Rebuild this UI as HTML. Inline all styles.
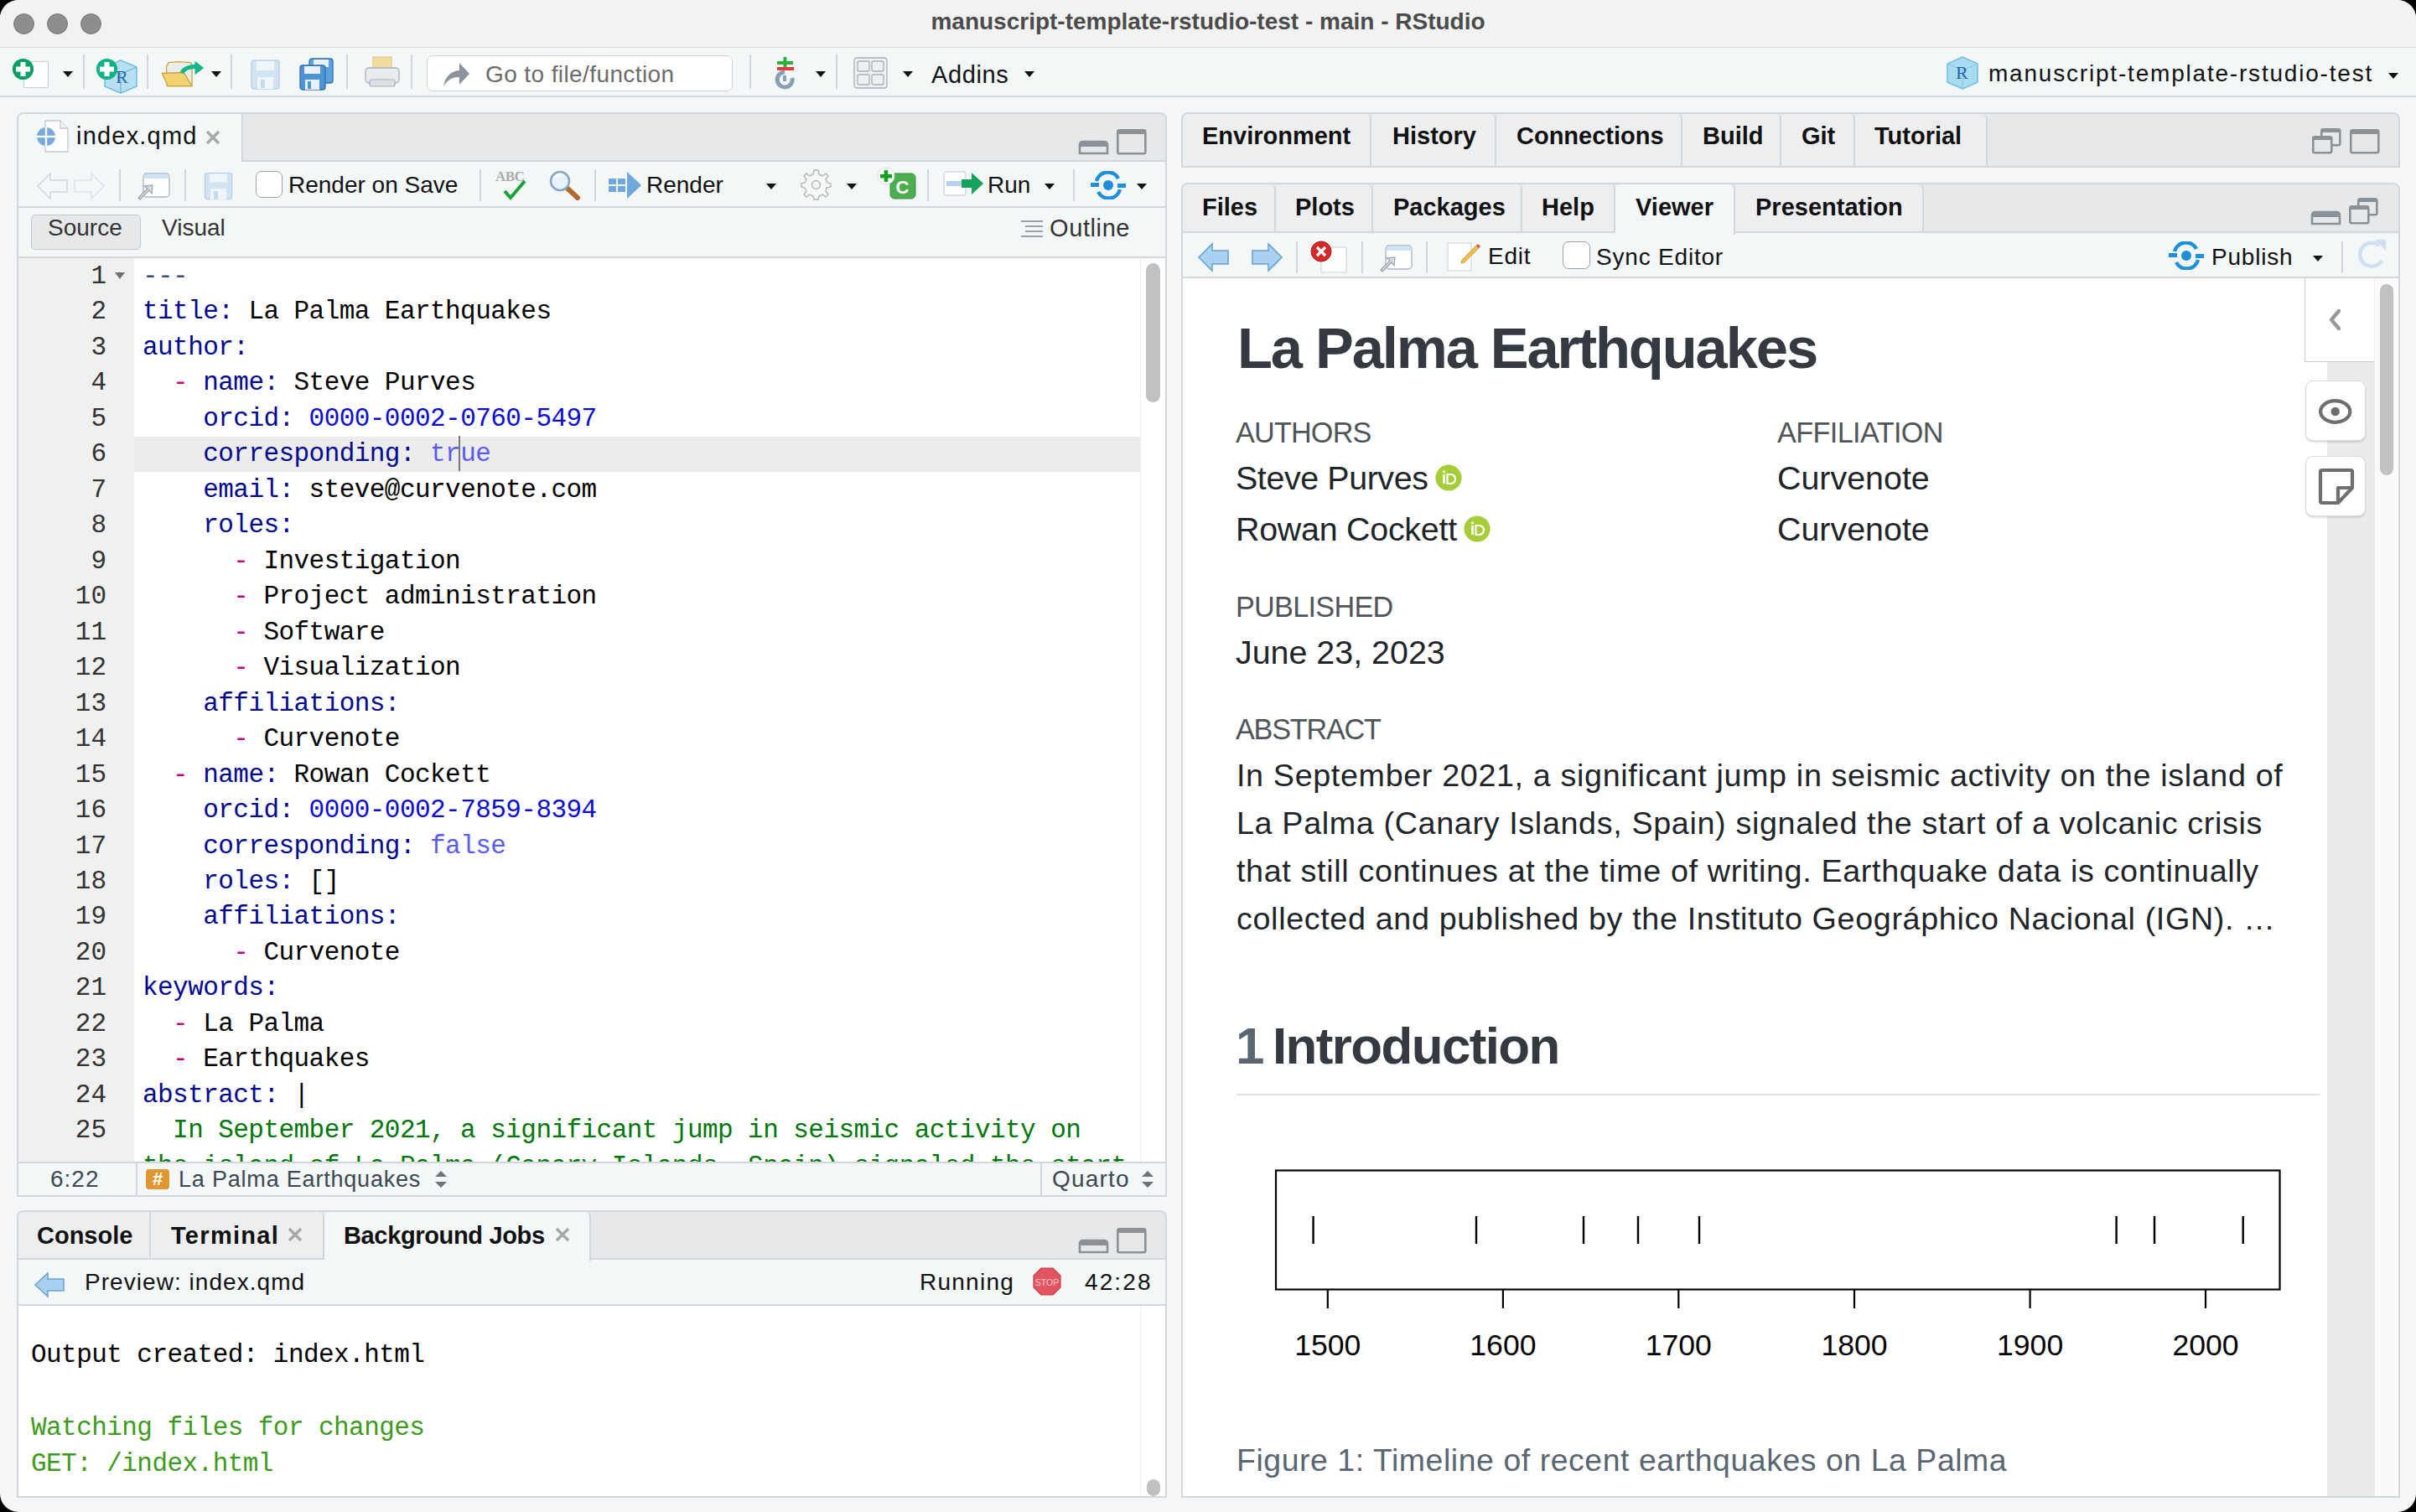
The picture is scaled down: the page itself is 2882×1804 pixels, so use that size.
<!DOCTYPE html>
<html><head><meta charset="utf-8">
<style>
*{box-sizing:border-box;margin:0;padding:0}
html,body{width:2882px;height:1804px;overflow:hidden;background:#000}
body{font-family:"Liberation Sans",sans-serif;position:relative}
.a{position:absolute}
#win{position:absolute;left:0;top:0;width:2882px;height:1804px;background:#f5f6f8;border-radius:22px;overflow:hidden}
#title{left:0;top:0;width:2882px;height:57px;background:#f2f2f2;border-bottom:1px solid #d9d9d9}
.tl{width:25px;height:25px;border-radius:50%;background:#8d8d8d;border:1.5px solid #767676;top:16px}
#ttext{left:0;top:10px;width:2882px;text-align:center;font-weight:bold;font-size:28px;color:#4b4b4b;white-space:nowrap}
#tb{left:0;top:57px;width:2882px;height:59px;background:#f3f7f8;border-bottom:2px solid #d6dade}
.sep{width:2px;background:#d3d6d9}
.dd{width:0;height:0;border-left:7px solid transparent;border-right:7px solid transparent;border-top:7px solid #111}
.box{border:2px solid #d3d7db;background:#f3f7f8}
.strip{background:#e6e8ea}
.tab{font-weight:bold;font-size:29px;color:#111;white-space:nowrap}
.ui{font-size:28px;color:#111;white-space:nowrap}
.mono{font-family:"Liberation Mono",monospace}
.hl{border-bottom:2px solid #d3d7db}
#code .ln{position:absolute;left:0;width:105px;text-align:right;color:#333;letter-spacing:0}
#code .l{position:absolute;left:148px;white-space:pre;color:#000}
.k{color:#00078e}.d{color:#c4008a}.n{color:#0a0ad0}.b{color:#5b5bef}.g{color:#00760a}.dash{color:#3c4e78}
</style></head>
<body>
<div id="win">
  <!-- title bar -->
  <div id="title" class="a">
    <div class="a tl" style="left:16px"></div>
    <div class="a tl" style="left:56px"></div>
    <div class="a tl" style="left:96px"></div>
    <div id="ttext" class="a">manuscript-template-rstudio-test - main - RStudio</div>
  </div>
  <!-- main toolbar -->

  <div id="tb" class="a">
    <!-- new file -->
    <svg class="a" style="left:12px;top:9px" width="52" height="52" viewBox="0 0 52 52">
      <rect x="16.5" y="7.5" width="29" height="31" rx="1.5" fill="#fff" stroke="#c9ced6" stroke-width="1.2"/>
      <circle cx="15.5" cy="16.5" r="12.6" fill="#0a9f65"/>
      <rect x="7" y="13.5" width="17" height="6" fill="#fff"/><rect x="12.5" y="8" width="6" height="17" fill="#fff"/>
    </svg>
    <div class="a dd" style="left:75px;top:28px;border-width:7px 6.5px 0 6.5px"></div>
    <div class="a sep" style="left:99px;top:8px;height:41px"></div>
    <!-- new project -->
    <svg class="a" style="left:112px;top:9px" width="54" height="52" viewBox="0 0 54 52">
      <path d="M13 14 L32 6 L51 14 L51 37 L32 45 L13 37 Z" fill="#b8e0f2" stroke="#5cb8d8" stroke-width="1.3"/>
      <path d="M13 14 L32 22 L51 14 M32 22 L32 45" fill="none" stroke="#5cb8d8" stroke-width="1.2"/>
      <text x="26" y="33" font-family="Liberation Serif" font-size="22" fill="#2460b0">R</text>
      <circle cx="15.5" cy="16.5" r="12.6" fill="#0db287"/>
      <rect x="7" y="13.5" width="17" height="6" fill="#fff"/><rect x="12.5" y="8" width="6" height="17" fill="#fff"/>
    </svg>
    <div class="a sep" style="left:175px;top:8px;height:41px"></div>
    <!-- open -->
    <svg class="a" style="left:190px;top:7px" width="56" height="50" viewBox="0 0 56 50">
      <path d="M8.5 15.5 L11 10.6 L22.6 9.7 L37.5 10.6 L39 13 L39 38.7 L9.3 38.7 Z" fill="#ececec" stroke="#c9a441" stroke-width="1.3"/>
      <path d="M3.5 23.5 L29.2 22.5 L38.8 38.7 L10.2 38.7 Z" fill="#f2d273" stroke="#c9a441" stroke-width="1.3"/>
      <path d="M26.7 23 C30 17 36 15.5 43 15.5" fill="none" stroke="#12b78a" stroke-width="5"/>
      <path d="M42.5 8.7 L53.2 17 L42.5 25.3 Z" fill="#12b78a"/>
    </svg>
    <div class="a dd" style="left:252px;top:28px;border-width:7px 6.5px 0 6.5px"></div>
    <div class="a sep" style="left:275px;top:8px;height:41px"></div>
    <!-- save (faded) -->
    <svg class="a" style="left:298px;top:13px" width="38" height="38" viewBox="0 0 38 38">
      <rect x="2" y="2" width="33" height="34" rx="3" fill="#d3e3f2" stroke="#bcd2e8" stroke-width="1.5"/>
      <rect x="8" y="3" width="21" height="11" fill="#eef5fb"/>
      <rect x="9" y="22" width="19" height="14" fill="#eef5fb"/><rect x="13" y="25" width="5" height="10" fill="#c5daee"/>
    </svg>
    <!-- save all -->
    <svg class="a" style="left:356px;top:11px" width="44" height="40" viewBox="0 0 44 40">
      <rect x="13" y="2" width="28" height="29" rx="3" fill="#5aa4e0" stroke="#2f6fb5" stroke-width="1.3"/>
      <rect x="18" y="3" width="18" height="9" fill="#e8f2fb"/>
      <rect x="2" y="10" width="30" height="29" rx="3" fill="#4f95d6" stroke="#2f6fb5" stroke-width="1.3"/>
      <rect x="7" y="11" width="19" height="9" fill="#e8f2fb"/>
      <rect x="8" y="27" width="17" height="12" fill="#e8f2fb"/><rect x="11" y="29" width="4" height="9" fill="#4f95d6"/>
    </svg>
    <div class="a sep" style="left:413px;top:8px;height:41px"></div>
    <!-- print -->
    <svg class="a" style="left:434px;top:9px" width="44" height="42" viewBox="0 0 44 42">
      <rect x="11" y="2" width="22" height="16" fill="#f2dca0" stroke="#d9c27e" stroke-width="1"/>
      <rect x="2" y="15" width="40" height="18" rx="4" fill="#e9ecef" stroke="#a9b0b8" stroke-width="1.3"/>
      <rect x="7" y="29" width="30" height="8" rx="2" fill="#dde1e5" stroke="#a9b0b8" stroke-width="1.2"/>
    </svg>
    <div class="a sep" style="left:490px;top:8px;height:41px"></div>
    <!-- goto -->
    <div class="a" style="left:509px;top:9px;width:365px;height:43px;background:#fff;border:1.5px solid #cfd4d9;border-radius:7px"></div>
    <svg class="a" style="left:526px;top:15px" width="36" height="34" viewBox="0 0 36 34">
      <path d="M3 31 C5 18 14 12 22 12 L22 3 L34 16 L22 29 L22 20 C14 20 8 23 3 31 Z" fill="#8d949b"/>
    </svg>
    <div class="a ui" style="left:579px;top:16px;color:#6b6b6b;font-size:28px;letter-spacing:0.4px">Go to file/function</div>
    <div class="a sep" style="left:894px;top:8px;height:41px"></div>
    <!-- git -->
    <svg class="a" style="left:924px;top:9px" width="26" height="42" viewBox="0 0 26 42">
      <rect x="10.5" y="2" width="4" height="14" fill="#2cb23a"/><rect x="3" y="7" width="19" height="4" fill="#2cb23a"/>
      <rect x="3" y="14" width="20" height="4" fill="#e23b3b"/>
      <path d="M21 27 A9 9 0 1 1 12 20" fill="none" stroke="#8aa0b2" stroke-width="5"/>
      <path d="M12 24 L12 31" stroke="#8aa0b2" stroke-width="4"/>
    </svg>
    <div class="a dd" style="left:973px;top:28px;border-width:7px 6.5px 0 6.5px"></div>
    <div class="a sep" style="left:997px;top:8px;height:41px"></div>
    <!-- grid -->
    <svg class="a" style="left:1018px;top:11px" width="42" height="38" viewBox="0 0 42 38">
      <rect x="1" y="1" width="39" height="36" rx="3" fill="#eef1f4" stroke="#a7b0b9" stroke-width="1.3"/>
      <rect x="5" y="5" width="14" height="12" rx="2" fill="none" stroke="#a7b0b9" stroke-width="1.3"/>
      <rect x="22" y="5" width="14" height="12" rx="2" fill="none" stroke="#a7b0b9" stroke-width="1.3"/>
      <rect x="5" y="21" width="14" height="12" rx="2" fill="none" stroke="#a7b0b9" stroke-width="1.3"/>
      <rect x="22" y="21" width="14" height="12" rx="2" fill="none" stroke="#a7b0b9" stroke-width="1.3"/>
    </svg>
    <div class="a dd" style="left:1077px;top:28px;border-width:7px 6.5px 0 6.5px"></div>
    <div class="a ui" style="left:1111px;top:15.5px;font-size:29px;letter-spacing:0.6px">Addins</div>
    <div class="a dd" style="left:1222px;top:28px;border-width:7px 6.5px 0 6.5px"></div>
    <!-- project -->
    <svg class="a" style="left:2320px;top:9px" width="42" height="42" viewBox="0 0 42 42">
      <path d="M3 10 L21 2 L39 10 L39 32 L21 40 L3 32 Z" fill="#a9dcf2" stroke="#5cb8d8" stroke-width="1.3"/>
      <path d="M3 10 L21 18 L39 10 M21 18 L21 40" fill="none" stroke="#7cc6e0" stroke-width="1"/>
      <text x="13" y="28" font-family="Liberation Serif" font-size="22" fill="#2860a8">R</text>
    </svg>
    <div class="a ui" style="left:2372px;top:15px;font-size:28px;letter-spacing:1.8px">manuscript-template-rstudio-test</div>
    <div class="a dd" style="left:2849px;top:30px;border-width:7px 6.5px 0 6.5px"></div>
  </div>

  <!-- LEFT SOURCE PANE -->
  <div class="a box" style="left:20px;top:134px;width:1372px;height:1294px;border-radius:8px 8px 0 0;background:#f3f7f8"></div>
  <div class="a strip" style="left:22px;top:136px;width:1368px;height:57px;border-radius:6px 6px 0 0;border-bottom:2px solid #d3d7db"></div>
  <div class="a" style="left:22px;top:136px;width:268px;height:59px;background:#f3f7f8;border-right:2px solid #d3d7db;border-radius:6px 0 0 0"></div>
  <div class="a hl" style="left:22px;top:193px;width:1368px;height:55px;background:#f3f7f8"></div>
  <div class="a hl" style="left:22px;top:248px;width:1368px;height:60px;background:#f3f7f8"></div>
  <div id="code" class="a" style="left:22px;top:308px;width:1368px;height:1078px;background:#fff;overflow:hidden"><div class="a" style="left:0;top:0;width:138px;height:1078px;background:#f0f0f0"></div><div class="a" style="left:138px;top:213px;width:1200px;height:42px;background:#ececec"></div><div class="a mono" style="left:0;top:1px;width:1368px;font-size:31px;letter-spacing:-0.55px;line-height:42.47px"><div class="ln" style="top:0.00px">1</div><div class="l" style="top:0.00px"><span class="dash">---</span></div><div class="ln" style="top:42.47px">2</div><div class="l" style="top:42.47px"><span class="k">title:</span> La Palma Earthquakes</div><div class="ln" style="top:84.94px">3</div><div class="l" style="top:84.94px"><span class="k">author:</span></div><div class="ln" style="top:127.41px">4</div><div class="l" style="top:127.41px">  <span class="d">-</span> <span class="k">name:</span> Steve Purves</div><div class="ln" style="top:169.88px">5</div><div class="l" style="top:169.88px">    <span class="k">orcid:</span> <span class="n">0000-0002-0760-5497</span></div><div class="ln" style="top:212.35px">6</div><div class="l" style="top:212.35px">    <span class="k">corresponding:</span> <span class="b">true</span></div><div class="ln" style="top:254.82px">7</div><div class="l" style="top:254.82px">    <span class="k">email:</span> steve@curvenote.com</div><div class="ln" style="top:297.29px">8</div><div class="l" style="top:297.29px">    <span class="k">roles:</span></div><div class="ln" style="top:339.76px">9</div><div class="l" style="top:339.76px">      <span class="d">-</span> Investigation</div><div class="ln" style="top:382.23px">10</div><div class="l" style="top:382.23px">      <span class="d">-</span> Project administration</div><div class="ln" style="top:424.70px">11</div><div class="l" style="top:424.70px">      <span class="d">-</span> Software</div><div class="ln" style="top:467.17px">12</div><div class="l" style="top:467.17px">      <span class="d">-</span> Visualization</div><div class="ln" style="top:509.64px">13</div><div class="l" style="top:509.64px">    <span class="k">affiliations:</span></div><div class="ln" style="top:552.11px">14</div><div class="l" style="top:552.11px">      <span class="d">-</span> Curvenote</div><div class="ln" style="top:594.58px">15</div><div class="l" style="top:594.58px">  <span class="d">-</span> <span class="k">name:</span> Rowan Cockett</div><div class="ln" style="top:637.05px">16</div><div class="l" style="top:637.05px">    <span class="k">orcid:</span> <span class="n">0000-0002-7859-8394</span></div><div class="ln" style="top:679.52px">17</div><div class="l" style="top:679.52px">    <span class="k">corresponding:</span> <span class="b">false</span></div><div class="ln" style="top:721.99px">18</div><div class="l" style="top:721.99px">    <span class="k">roles:</span> []</div><div class="ln" style="top:764.46px">19</div><div class="l" style="top:764.46px">    <span class="k">affiliations:</span></div><div class="ln" style="top:806.93px">20</div><div class="l" style="top:806.93px">      <span class="d">-</span> Curvenote</div><div class="ln" style="top:849.40px">21</div><div class="l" style="top:849.40px"><span class="k">keywords:</span></div><div class="ln" style="top:891.87px">22</div><div class="l" style="top:891.87px">  <span class="d">-</span> La Palma</div><div class="ln" style="top:934.34px">23</div><div class="l" style="top:934.34px">  <span class="d">-</span> Earthquakes</div><div class="ln" style="top:976.81px">24</div><div class="l" style="top:976.81px"><span class="k">abstract:</span> |</div><div class="ln" style="top:1019.28px">25</div><div class="l" style="top:1019.28px"><span class="g">  In September 2021, a significant jump in seismic activity on</span></div><div class="ln" style="top:1061.75px"></div><div class="l" style="top:1061.75px"><span class="g">the island of La Palma (Canary Islands, Spain) signaled the start</span></div></div><div class="a" style="left:115px;top:17px;width:0;height:0;border-left:6.5px solid transparent;border-right:6.5px solid transparent;border-top:8px solid #6f6f6f"></div><div class="a" style="left:525px;top:212px;width:2px;height:42px;background:#777"></div><div class="a" style="left:1338px;top:0;width:1px;height:1078px;background:#ececec"></div><div class="a" style="left:1345px;top:6px;width:17px;height:166px;border-radius:9px;background:#c1c1c1"></div></div>
  <div class="a" style="left:22px;top:1386px;width:1368px;height:40px;background:#f3f7f8;border-top:2px solid #d3d7db"></div>


  <!-- source tab -->
  <svg class="a" style="left:42px;top:141px" width="42" height="42" viewBox="0 0 42 42">
    <path d="M12 3 L30 3 L39 12 L39 40 L12 40 Z" fill="#fff" stroke="#c3c9cf" stroke-width="1.3"/>
    <path d="M30 3 L30 12 L39 12" fill="#f0f2f4" stroke="#c3c9cf" stroke-width="1.3"/>
    <circle cx="13" cy="22" r="11" fill="#75aadb"/>
    <rect x="2" y="20.8" width="22" height="2.4" fill="#fff"/><rect x="11.8" y="11" width="2.4" height="22" fill="#fff"/>
  </svg>
  <div class="a" style="left:91px;top:146px;font-size:29px;color:#111;white-space:nowrap;letter-spacing:1.2px">index.qmd</div>
  <svg class="a" style="left:244px;top:154px" width="20" height="20" viewBox="0 0 20 20"><path d="M3 3 L17 17 M17 3 L3 17" stroke="#a8a8a8" stroke-width="3.4"/></svg>
  <!-- pane min/max -->
  <svg class="a" style="left:1286px;top:152px" width="84" height="34" viewBox="0 0 84 34">
    <path d="M2 31 L2 21 Q2 17 6 17 L31 17 Q35 17 35 21 L35 31 Z" fill="none" stroke="#8a9298" stroke-width="2.6"/>
    <rect x="2" y="17" width="33" height="6" fill="#8a9298"/>
    <rect x="47.3" y="3.3" width="33" height="28" rx="2" fill="none" stroke="#8a9298" stroke-width="2.6"/>
    <rect x="47" y="3" width="34" height="5" fill="#8a9298"/>
  </svg>
  <!-- editor toolbar -->
  <svg class="a" style="left:43px;top:204px" width="84" height="36" viewBox="0 0 84 36">
    <path d="M2 18 L17 3 L17 11 L37 11 L37 25 L17 25 L17 33 Z" fill="#f3f7f8" stroke="#cfd5da" stroke-width="1.5"/>
    <path d="M81 18 L66 3 L66 11 L46 11 L46 25 L66 25 L66 33 Z" fill="#f3f7f8" stroke="#dde2e6" stroke-width="1.5"/>
  </svg>
  <div class="a sep" style="left:142px;top:202px;height:38px"></div>
  <svg class="a" style="left:162px;top:205px" width="42" height="34" viewBox="0 0 42 34">
    <rect x="9" y="2" width="31" height="28" rx="4" fill="#fff" stroke="#aab4be" stroke-width="1.3"/>
    <path d="M9.5 6 Q9.5 2.5 13 2.5 L36 2.5 Q39.5 2.5 39.5 6 L39.5 8 L9.5 8 Z" fill="#cfe3f5"/>
    <path d="M3 31 L14 20 L10 17 L20 16 L19 26 L16 22 L5 33 Z" fill="#d6dbe0" stroke="#97a2ad" stroke-width="1.2"/>
  </svg>
  <div class="a sep" style="left:220px;top:202px;height:38px"></div>
  <svg class="a" style="left:243px;top:205px" width="36" height="34" viewBox="0 0 36 34">
    <rect x="1.5" y="1.5" width="32" height="31" rx="3" fill="#d3e3f2" stroke="#bcd2e8" stroke-width="1.5"/>
    <rect x="7" y="2.5" width="21" height="10" fill="#eef5fb"/>
    <rect x="8" y="20" width="19" height="13" fill="#eef5fb"/><rect x="12" y="23" width="5" height="10" fill="#c5daee"/>
  </svg>
  <div class="a" style="left:305px;top:204px;width:32px;height:32px;border:1.6px solid #9ba0a5;border-radius:7px;background:#fff"></div>
  <div class="a ui" style="left:344px;top:205px;font-size:28px">Render on Save</div>
  <div class="a sep" style="left:572px;top:202px;height:38px"></div>
  <svg class="a" style="left:590px;top:200px" width="48" height="40" viewBox="0 0 48 40">
    <text x="1" y="16" font-family="Liberation Serif" font-weight="bold" font-size="17" fill="#aaa" letter-spacing="-0.5">ABC</text>
    <path d="M12 28 L19 36 L36 16" fill="none" stroke="#1ca03a" stroke-width="4"/>
  </svg>
  <svg class="a" style="left:654px;top:202px" width="40" height="38" viewBox="0 0 40 38">
    <path d="M21 21 L35 34" stroke="#b06a2d" stroke-width="6" stroke-linecap="round"/>
    <circle cx="14" cy="14" r="11" fill="#e8f2fb" stroke="#8aa9c4" stroke-width="2.6"/>
    <path d="M8 10 Q11 6 16 6" stroke="#fff" stroke-width="2.5" fill="none"/>
  </svg>
  <div class="a sep" style="left:709px;top:202px;height:38px"></div>
  <svg class="a" style="left:725px;top:204px" width="42" height="34" viewBox="0 0 42 34">
    <rect x="1" y="9" width="9" height="7" fill="#6fa8dc"/><rect x="12" y="9" width="9" height="7" fill="#6fa8dc"/>
    <rect x="1" y="18" width="9" height="7" fill="#6fa8dc"/><rect x="12" y="18" width="9" height="7" fill="#6fa8dc"/>
    <path d="M23 1 L40 17 L23 33 Z" fill="#6fa8dc"/>
  </svg>
  <div class="a ui" style="left:771px;top:205px;font-size:28px">Render</div>
  <div class="a dd" style="left:914px;top:219px;border-width:7px 6.5px 0 6.5px"></div>
  <svg class="a" style="left:954px;top:201px" width="38" height="38" viewBox="0 0 38 38">
    <path d="M19 2 L22 2 L23 7 L27 9 L31 6 L34 9 L31 13 L33 17 L37 18 L37 22 L32 23 L31 27 L34 31 L31 34 L27 31 L23 33 L22 37 L17 37 L16 33 L12 31 L8 34 L5 31 L8 27 L6 23 L2 22 L2 18 L6 17 L8 13 L5 9 L8 6 L12 9 L16 7 L17 2 Z" fill="#f7f7f7" stroke="#b5b5b5" stroke-width="1.4"/>
    <circle cx="19.5" cy="19.5" r="5" fill="#f3f7f8" stroke="#b5b5b5" stroke-width="1.4"/>
  </svg>
  <div class="a dd" style="left:1010px;top:219px;border-width:7px 6.5px 0 6.5px"></div>
  <svg class="a" style="left:1046px;top:199px" width="48" height="40" viewBox="0 0 48 40">
    <rect x="16" y="8" width="30" height="30" rx="5" fill="#4cae4f" stroke="#3a8f3d" stroke-width="1"/>
    <text x="22.5" y="32" font-family="Liberation Sans" font-weight="bold" font-size="22" fill="#fff">C</text>
    <circle cx="11" cy="11" r="10" fill="#fff" stroke="#ddd" stroke-width="1"/>
    <rect x="4" y="9" width="14" height="4.5" fill="#17a020"/><rect x="8.7" y="4" width="4.5" height="14" fill="#17a020"/>
  </svg>
  <div class="a sep" style="left:1106px;top:202px;height:38px"></div>
  <svg class="a" style="left:1125px;top:203px" width="50" height="32" viewBox="0 0 50 32">
    <rect x="1" y="2" width="26" height="28" rx="3" fill="#fff" stroke="#cfd5da" stroke-width="1.3"/>
    <rect x="4" y="13" width="18" height="6" fill="#b7d2ef"/>
    <rect x="22" y="11" width="14" height="10" fill="#13a35a"/>
    <path d="M34 3 L48 16 L34 29 Z" fill="#13a35a"/>
  </svg>
  <div class="a ui" style="left:1178px;top:205px;font-size:28px">Run</div>
  <div class="a dd" style="left:1246px;top:219px;border-width:7px 6.5px 0 6.5px"></div>
  <div class="a sep" style="left:1280px;top:202px;height:38px"></div>
  <svg class="a" style="left:1300px;top:204px" width="44" height="34" viewBox="0 0 44 34">
    <path d="M8 12 A14 14 0 0 1 34 9" fill="none" stroke="#1e8fd8" stroke-width="4.5"/>
    <path d="M36 22 A14 14 0 0 1 10 25" fill="none" stroke="#1e8fd8" stroke-width="4.5"/>
    <rect x="1" y="14" width="10" height="5" fill="#1e8fd8"/><rect x="33" y="15" width="10" height="5" fill="#1e8fd8"/>
    <circle cx="22" cy="17" r="6" fill="#1e8fd8"/>
  </svg>
  <div class="a dd" style="left:1356px;top:219px;border-width:7px 6.5px 0 6.5px"></div>
  <!-- source / visual -->
  <div class="a" style="left:37px;top:256px;width:131px;height:42px;background:#e6e8ea;border:1.5px solid #c2c7cc;border-radius:5px"></div>
  <div class="a ui" style="left:57px;top:256px;font-size:28px;color:#333">Source</div>
  <div class="a ui" style="left:193px;top:256px;font-size:28px;color:#333">Visual</div>
  <svg class="a" style="left:1217px;top:262px" width="28" height="24" viewBox="0 0 28 24">
    <path d="M1 2 H27 M6 8 H27 M6 14 H27 M1 20 H27" stroke="#9aa1a8" stroke-width="2"/>
  </svg>
  <div class="a ui" style="left:1252px;top:256px;font-size:29px;color:#333;letter-spacing:0.6px">Outline</div>
  <!-- status bar -->
  <div class="a ui" style="left:60px;top:1391px;font-size:28px;color:#3d4852;letter-spacing:1px">6:22</div>
  <div class="a" style="left:162px;top:1388px;width:2px;height:38px;background:#d3d7db"></div>
  <div class="a" style="left:174px;top:1395px;width:28px;height:24px;background:#e0972f;border-radius:4px;color:#fff;font-weight:bold;font-size:22px;text-align:center;line-height:24px">#</div>
  <div class="a ui" style="left:213px;top:1392px;font-size:27px;color:#3d4852;letter-spacing:0.8px">La Palma Earthquakes</div>
  <svg class="a" style="left:518px;top:1396px" width="16" height="22" viewBox="0 0 16 22"><path d="M1 8 L8 1 L15 8 Z M1 14 L8 21 L15 14 Z" fill="#6b737a"/></svg>
  <div class="a" style="left:1241px;top:1388px;width:2px;height:38px;background:#d3d7db"></div>
  <div class="a ui" style="left:1255px;top:1391px;font-size:28px;color:#3d4852;letter-spacing:1.2px">Quarto</div>
  <svg class="a" style="left:1361px;top:1396px" width="16" height="22" viewBox="0 0 16 22"><path d="M1 8 L8 1 L15 8 Z M1 14 L8 21 L15 14 Z" fill="#6b737a"/></svg>

  <!-- CONSOLE PANE -->
  <div class="a box" style="left:20px;top:1444px;width:1372px;height:343px;border-radius:8px 8px 0 0"></div>
  <div class="a strip" style="left:22px;top:1446px;width:1368px;height:57px;border-radius:6px 6px 0 0;border-bottom:2px solid #d3d7db"></div>
  <div class="a hl" style="left:22px;top:1503px;width:1368px;height:55px;background:#f3f7f8"></div>

  <!-- console tabs -->
  <div class="a" style="left:22px;top:1446px;width:158px;height:57px;background:#eceef0;border-right:2px solid #d3d7db;border-bottom:2px solid #d3d7db;border-radius:6px 0 0 0"></div>
  <div class="a" style="left:180px;top:1446px;width:207px;height:57px;background:#eceef0;border-right:2px solid #d3d7db;border-bottom:2px solid #d3d7db;border-radius:6px 6px 0 0"></div>
  <div class="a" style="left:387px;top:1446px;width:318px;height:59px;background:#f3f7f8;border-right:2px solid #d3d7db;border-radius:6px 6px 0 0"></div>
  <div class="a tab" style="left:44px;top:1458px">Console</div>
  <div class="a tab" style="left:204px;top:1458px;letter-spacing:1.3px">Terminal</div>
  <svg class="a" style="left:342px;top:1463px" width="20" height="20" viewBox="0 0 20 20"><path d="M3 3 L17 17 M17 3 L3 17" stroke="#a8a8a8" stroke-width="3.4"/></svg>
  <div class="a tab" style="left:410px;top:1458px;letter-spacing:-0.35px">Background Jobs</div>
  <svg class="a" style="left:661px;top:1463px" width="20" height="20" viewBox="0 0 20 20"><path d="M3 3 L17 17 M17 3 L3 17" stroke="#a8a8a8" stroke-width="3.4"/></svg>
  <svg class="a" style="left:1286px;top:1463px" width="84" height="34" viewBox="0 0 84 34">
    <path d="M2 31 L2 21 Q2 17 6 17 L31 17 Q35 17 35 21 L35 31 Z" fill="none" stroke="#8a9298" stroke-width="2.6"/>
    <rect x="2" y="17" width="33" height="6" fill="#8a9298"/>
    <rect x="47.3" y="3.3" width="33" height="28" rx="2" fill="none" stroke="#8a9298" stroke-width="2.6"/>
    <rect x="47" y="3" width="34" height="5" fill="#8a9298"/>
  </svg>
  <!-- console toolbar -->
  <svg class="a" style="left:40px;top:1517px" width="38" height="32" viewBox="0 0 38 32">
    <path d="M2 16 L17 2 L17 9 L36 9 L36 23 L17 23 L17 30 Z" fill="#a8d0ef" stroke="#6aa3d2" stroke-width="1.5"/>
  </svg>
  <div class="a ui" style="left:101px;top:1514px;font-size:28px;letter-spacing:1.05px">Preview: index.qmd</div>
  <div class="a ui" style="left:1097px;top:1514px;font-size:28px;letter-spacing:1.25px">Running</div>
  <svg class="a" style="left:1232px;top:1512px" width="34" height="34" viewBox="0 0 34 34">
    <path d="M10 1 L24 1 L33 10 L33 24 L24 33 L10 33 L1 24 L1 10 Z" fill="#e05561" stroke="#c43c48" stroke-width="1.2"/>
    <text x="17" y="21.5" text-anchor="middle" font-family="Liberation Sans" font-size="10.5" fill="#f7c9cd">STOP</text>
  </svg>
  <div class="a ui" style="left:1294px;top:1514px;font-size:28px;letter-spacing:2.1px">42:28</div>
  <div id="cons" class="a mono" style="left:22px;top:1558px;width:1368px;height:227px;background:#fff;font-size:31px;letter-spacing:-0.55px;overflow:hidden">
    <div class="a" style="left:15px;top:37px;white-space:pre;color:#000;line-height:43.25px">Output created: index.html</div>
    <div class="a" style="left:15px;top:123.5px;white-space:pre;color:#3e9a1c;line-height:43.25px">Watching files for changes</div>
    <div class="a" style="left:15px;top:166.75px;white-space:pre;color:#3e9a1c;line-height:43.25px">GET: /index.html</div>
    <div class="a" style="left:1338px;top:0;width:1px;height:227px;background:#ececec"></div>
    <div class="a" style="left:1346px;top:207px;width:16px;height:20px;border-radius:8px;background:#c1c1c1"></div>
  </div>

  <!-- RIGHT TOP PANE (minimized) -->

  <div class="a strip" style="left:1409px;top:134px;width:1454px;height:66px;border:2px solid #d3d7db;border-radius:8px 8px 0 0"></div>
<div class="a" style="left:1411px;top:136px;width:225px;height:62px;background:#eceef0;border-right:2px solid #d3d7db;border-radius:6px 6px 0 0"></div>
<div class="a" style="left:1636px;top:136px;width:149px;height:62px;background:#eceef0;border-right:2px solid #d3d7db;border-radius:6px 6px 0 0"></div>
<div class="a" style="left:1785px;top:136px;width:222px;height:62px;background:#eceef0;border-right:2px solid #d3d7db;border-radius:6px 6px 0 0"></div>
<div class="a" style="left:2007px;top:136px;width:118px;height:62px;background:#eceef0;border-right:2px solid #d3d7db;border-radius:6px 6px 0 0"></div>
<div class="a" style="left:2125px;top:136px;width:88px;height:62px;background:#eceef0;border-right:2px solid #d3d7db;border-radius:6px 6px 0 0"></div>
<div class="a" style="left:2213px;top:136px;width:158px;height:62px;background:#eceef0;border-right:2px solid #d3d7db;border-radius:6px 6px 0 0"></div>
  <div class="a tab" style="left:1434px;top:146px">Environment</div>
  <div class="a tab" style="left:1661px;top:146px">History</div>
  <div class="a tab" style="left:1809px;top:146px">Connections</div>
  <div class="a tab" style="left:2031px;top:146px">Build</div>
  <div class="a tab" style="left:2149px;top:146px">Git</div>
  <div class="a tab" style="left:2236px;top:146px">Tutorial</div>
  <svg class="a" style="left:2756px;top:151px" width="86" height="34" viewBox="0 0 86 34">
    <rect x="13.3" y="3.3" width="22" height="19" rx="2" fill="none" stroke="#8a9298" stroke-width="2.6"/>
    <rect x="13" y="3" width="23" height="4" fill="#8a9298"/>
    <rect x="3.3" y="12.3" width="22" height="19" rx="2" fill="#e6e8ea" stroke="#8a9298" stroke-width="2.6"/>
    <rect x="3" y="12" width="23" height="4" fill="#8a9298"/>
    <rect x="48.3" y="4.3" width="33" height="27" rx="2" fill="none" stroke="#8a9298" stroke-width="2.6"/>
    <rect x="48" y="4" width="34" height="5" fill="#8a9298"/>
  </svg>

  <!-- RIGHT BOTTOM PANE -->
  <div class="a box" style="left:1409px;top:218px;width:1454px;height:1569px;border-radius:8px 8px 0 0"></div>
  <div class="a strip" style="left:1411px;top:220px;width:1450px;height:58px;border-radius:6px 6px 0 0;border-bottom:2px solid #d3d7db"></div>
  <div class="a hl" style="left:1411px;top:278px;width:1450px;height:54px;background:#f3f7f8"></div>
<div class="a" style="left:1411px;top:220px;width:111px;height:58px;background:#eceef0;border-right:2px solid #d3d7db;border-bottom:2px solid #d3d7db;border-radius:6px 6px 0 0"></div>
<div class="a" style="left:1522px;top:220px;width:116px;height:58px;background:#eceef0;border-right:2px solid #d3d7db;border-bottom:2px solid #d3d7db;border-radius:6px 6px 0 0"></div>
<div class="a" style="left:1638px;top:220px;width:178px;height:58px;background:#eceef0;border-right:2px solid #d3d7db;border-bottom:2px solid #d3d7db;border-radius:6px 6px 0 0"></div>
<div class="a" style="left:1816px;top:220px;width:111px;height:58px;background:#eceef0;border-right:2px solid #d3d7db;border-bottom:2px solid #d3d7db;border-radius:6px 6px 0 0"></div>
<div class="a" style="left:1927px;top:220px;width:143px;height:60px;background:#f3f7f8;border-right:2px solid #d3d7db;border-radius:6px 6px 0 0"></div>
<div class="a" style="left:2070px;top:220px;width:225px;height:58px;background:#eceef0;border-right:2px solid #d3d7db;border-bottom:2px solid #d3d7db;border-radius:6px 6px 0 0"></div>
  <div class="a tab" style="left:1434px;top:231px">Files</div>
  <div class="a tab" style="left:1545px;top:231px">Plots</div>
  <div class="a tab" style="left:1662px;top:231px">Packages</div>
  <div class="a tab" style="left:1839px;top:231px">Help</div>
  <div class="a tab" style="left:1951px;top:231px">Viewer</div>
  <div class="a tab" style="left:2094px;top:231px">Presentation</div>
  <svg class="a" style="left:2756px;top:234px" width="86" height="36" viewBox="0 0 86 36">
    <path d="M2 33 L2 23 Q2 19 6 19 L31 19 Q35 19 35 23 L35 33 Z" fill="none" stroke="#8a9298" stroke-width="2.6"/>
    <rect x="2" y="19" width="33" height="6" fill="#8a9298"/>
    <rect x="57.3" y="3.3" width="22" height="19" rx="2" fill="none" stroke="#8a9298" stroke-width="2.6"/>
    <rect x="57" y="3" width="23" height="4" fill="#8a9298"/>
    <rect x="47.3" y="12.3" width="22" height="20" rx="2" fill="#e6e8ea" stroke="#8a9298" stroke-width="2.6"/>
    <rect x="47" y="12" width="23" height="4" fill="#8a9298"/>
  </svg>
  <!-- viewer toolbar -->
  <svg class="a" style="left:1428px;top:289px" width="106" height="36" viewBox="0 0 106 36">
    <path d="M2 18 L18 2 L18 10 L37 10 L37 26 L18 26 L18 34 Z" fill="#a9d1f0" stroke="#6aa3d2" stroke-width="1.6"/>
    <path d="M101 18 L85 2 L85 10 L66 10 L66 26 L85 26 L85 34 Z" fill="#a9d1f0" stroke="#6aa3d2" stroke-width="1.6"/>
  </svg>
  <div class="a sep" style="left:1546px;top:288px;height:38px"></div>
  <svg class="a" style="left:1562px;top:287px" width="48" height="40" viewBox="0 0 48 40">
    <rect x="14" y="8" width="30" height="30" fill="#fff" stroke="#d5dade" stroke-width="1.3"/>
    <circle cx="14" cy="13" r="12" fill="#d42a2a" stroke="#a51d1d" stroke-width="1"/>
    <path d="M9 8 L19 18 M19 8 L9 18" stroke="#fff" stroke-width="3.2"/>
  </svg>
  <div class="a sep" style="left:1624px;top:288px;height:38px"></div>
  <svg class="a" style="left:1644px;top:291px" width="42" height="34" viewBox="0 0 42 34">
    <rect x="9" y="2" width="31" height="28" rx="4" fill="#fff" stroke="#aab4be" stroke-width="1.3"/>
    <path d="M9.5 6 Q9.5 2.5 13 2.5 L36 2.5 Q39.5 2.5 39.5 6 L39.5 8 L9.5 8 Z" fill="#cfe3f5"/>
    <path d="M3 31 L14 20 L10 17 L20 16 L19 26 L16 22 L5 33 Z" fill="#d6dbe0" stroke="#97a2ad" stroke-width="1.2"/>
  </svg>
  <div class="a sep" style="left:1701px;top:288px;height:38px"></div>
  <svg class="a" style="left:1725px;top:288px" width="44" height="38" viewBox="0 0 44 38">
    <rect x="2" y="2" width="28" height="33" fill="#fff" stroke="#d5dade" stroke-width="1.3"/>
    <path d="M19 22 L36 5 L39 8 L22 25 L18 26 Z" fill="#f2c14e" stroke="#b5892a" stroke-width="0.8"/>
    <path d="M36 5 L39 8 L41 6 L38 3 Z" fill="#e0524a"/>
  </svg>
  <div class="a ui" style="left:1775px;top:289.5px;font-size:28px;letter-spacing:0.8px">Edit</div>
  <div class="a" style="left:1864px;top:288px;width:33px;height:33px;border:1.6px solid #9ba0a5;border-radius:7px;background:#fff"></div>
  <div class="a ui" style="left:1904px;top:291px;font-size:28px;letter-spacing:0.8px">Sync Editor</div>
  <svg class="a" style="left:2586px;top:288px" width="44" height="34" viewBox="0 0 44 34">
    <path d="M8 12 A14 14 0 0 1 34 9" fill="none" stroke="#1e8fd8" stroke-width="4.5"/>
    <path d="M36 22 A14 14 0 0 1 10 25" fill="none" stroke="#1e8fd8" stroke-width="4.5"/>
    <rect x="1" y="14" width="10" height="5" fill="#1e8fd8"/><rect x="33" y="15" width="10" height="5" fill="#1e8fd8"/>
    <circle cx="22" cy="17" r="6" fill="#1e8fd8"/>
  </svg>
  <div class="a ui" style="left:2638px;top:291px;font-size:28px;letter-spacing:0.8px">Publish</div>
  <div class="a dd" style="left:2759px;top:305px;border-width:7px 6.5px 0 6.5px"></div>
  <div class="a sep" style="left:2793px;top:288px;height:38px"></div>
  <svg class="a" style="left:2810px;top:284px" width="38" height="40" viewBox="0 0 38 40">
    <path d="M31 27 A14 14 0 1 1 28 9" fill="none" stroke="#cfdff0" stroke-width="4.5"/>
    <path d="M23 2 L36 2 L36 15 Z" fill="#cfdff0"/>
  </svg>

  <div id="view" class="a" style="left:1411px;top:332px;width:1450px;height:1453px;background:#fff;overflow:hidden"></div>
<div class="a" style="left:1476px;top:381.8px;font-size:68.7px;line-height:68.7px;color:#343a40;font-weight:bold;white-space:nowrap;letter-spacing:-2.1px;">La Palma Earthquakes</div>
<div class="a" style="left:1474px;top:498.8px;font-size:34.2px;line-height:34.2px;color:#50555a;white-space:nowrap;letter-spacing:-0.8px;">AUTHORS</div>
<div class="a" style="left:2120px;top:498.8px;font-size:34.2px;line-height:34.2px;color:#50555a;white-space:nowrap;letter-spacing:-0.6px;">AFFILIATION</div>
<div class="a" style="left:1474px;top:551.2px;font-size:39.4px;line-height:39.4px;color:#212529;white-space:nowrap;letter-spacing:-0.4px;">Steve Purves</div>
<div class="a" style="left:1474px;top:611.9px;font-size:39.4px;line-height:39.4px;color:#212529;white-space:nowrap;letter-spacing:-0.25px;">Rowan Cockett</div>
<div class="a" style="left:2120px;top:551.2px;font-size:39.4px;line-height:39.4px;color:#212529;white-space:nowrap;letter-spacing:0px;">Curvenote</div>
<div class="a" style="left:2120px;top:611.9px;font-size:39.4px;line-height:39.4px;color:#212529;white-space:nowrap;letter-spacing:0px;">Curvenote</div>
<svg class="a" style="left:1711.5px;top:554.4px" width="32" height="32" viewBox="0 0 32 32"><circle cx="16" cy="16" r="15.6" fill="#a6ce39"/><rect x="9.2" y="12" width="2.6" height="11" fill="#fff"/><circle cx="10.5" cy="8.8" r="1.6" fill="#fff"/><path d="M14.5 12 H18.5 A5.5 5.5 0 0 1 18.5 23 H14.5 Z" fill="none" stroke="#fff" stroke-width="2.2"/></svg>
<svg class="a" style="left:1746px;top:615px" width="32" height="32" viewBox="0 0 32 32"><circle cx="16" cy="16" r="15.6" fill="#a6ce39"/><rect x="9.2" y="12" width="2.6" height="11" fill="#fff"/><circle cx="10.5" cy="8.8" r="1.6" fill="#fff"/><path d="M14.5 12 H18.5 A5.5 5.5 0 0 1 18.5 23 H14.5 Z" fill="none" stroke="#fff" stroke-width="2.2"/></svg>
<div class="a" style="left:1474px;top:706.7px;font-size:34.2px;line-height:34.2px;color:#50555a;white-space:nowrap;letter-spacing:-0.7px;">PUBLISHED</div>
<div class="a" style="left:1474px;top:758.7px;font-size:39.4px;line-height:39.4px;color:#212529;white-space:nowrap;letter-spacing:0px;">June 23, 2023</div>
<div class="a" style="left:1474px;top:853.3px;font-size:34.2px;line-height:34.2px;color:#50555a;white-space:nowrap;letter-spacing:-1.2px;">ABSTRACT</div>
<div class="a" style="left:1475px;top:906.5px;font-size:37.7px;line-height:37.7px;color:#212529;white-space:nowrap;letter-spacing:0.65px;">In September 2021, a significant jump in seismic activity on the island of</div>
<div class="a" style="left:1475px;top:963.5px;font-size:37.7px;line-height:37.7px;color:#212529;white-space:nowrap;letter-spacing:0.65px;">La Palma (Canary Islands, Spain) signaled the start of a volcanic crisis</div>
<div class="a" style="left:1475px;top:1020.6px;font-size:37.7px;line-height:37.7px;color:#212529;white-space:nowrap;letter-spacing:0.65px;">that still continues at the time of writing. Earthquake data is continually</div>
<div class="a" style="left:1475px;top:1077.7px;font-size:37.7px;line-height:37.7px;color:#212529;white-space:nowrap;letter-spacing:0.65px;">collected and published by the Instituto Geogr&aacute;phico Nacional (IGN). &hellip;</div>
<div class="a" style="left:1474px;top:1216.5px;font-size:61.9px;line-height:61.9px;color:#5b6670;font-weight:bold;white-space:nowrap;letter-spacing:0px;">1</div>
<div class="a" style="left:1518px;top:1216.5px;font-size:61.9px;line-height:61.9px;color:#343a40;font-weight:bold;white-space:nowrap;letter-spacing:-1.6px;">Introduction</div>
<div class="a" style="left:1475px;top:1305px;width:1292px;height:2px;background:#dde1e6"></div>
<svg class="a" style="left:1500px;top:1380px" width="1260" height="260" viewBox="1500 1380 1260 260"><rect x="1522" y="1396.5" width="1197.5" height="142" fill="none" stroke="#000" stroke-width="2.2"/><line x1="1566.6" y1="1451" x2="1566.6" y2="1484" stroke="#000" stroke-width="2.4"/><line x1="1761" y1="1451" x2="1761" y2="1484" stroke="#000" stroke-width="2.4"/><line x1="1889" y1="1451" x2="1889" y2="1484" stroke="#000" stroke-width="2.4"/><line x1="1954" y1="1451" x2="1954" y2="1484" stroke="#000" stroke-width="2.4"/><line x1="2027" y1="1451" x2="2027" y2="1484" stroke="#000" stroke-width="2.4"/><line x1="2524.6" y1="1451" x2="2524.6" y2="1484" stroke="#000" stroke-width="2.4"/><line x1="2570" y1="1451" x2="2570" y2="1484" stroke="#000" stroke-width="2.4"/><line x1="2675.7" y1="1451" x2="2675.7" y2="1484" stroke="#000" stroke-width="2.4"/><line x1="1583.8" y1="1538" x2="1583.8" y2="1561" stroke="#000" stroke-width="2.2"/><line x1="1792.9" y1="1538" x2="1792.9" y2="1561" stroke="#000" stroke-width="2.2"/><line x1="2002.3" y1="1538" x2="2002.3" y2="1561" stroke="#000" stroke-width="2.2"/><line x1="2212" y1="1538" x2="2212" y2="1561" stroke="#000" stroke-width="2.2"/><line x1="2421.6" y1="1538" x2="2421.6" y2="1561" stroke="#000" stroke-width="2.2"/><line x1="2631" y1="1538" x2="2631" y2="1561" stroke="#000" stroke-width="2.2"/><text x="1583.8" y="1616.7" text-anchor="middle" font-family="Liberation Sans" font-size="35.6" fill="#000">1500</text><text x="1792.9" y="1616.7" text-anchor="middle" font-family="Liberation Sans" font-size="35.6" fill="#000">1600</text><text x="2002.3" y="1616.7" text-anchor="middle" font-family="Liberation Sans" font-size="35.6" fill="#000">1700</text><text x="2212" y="1616.7" text-anchor="middle" font-family="Liberation Sans" font-size="35.6" fill="#000">1800</text><text x="2421.6" y="1616.7" text-anchor="middle" font-family="Liberation Sans" font-size="35.6" fill="#000">1900</text><text x="2631" y="1616.7" text-anchor="middle" font-family="Liberation Sans" font-size="35.6" fill="#000">2000</text></svg>
<div class="a" style="left:1475px;top:1723.9px;font-size:37.4px;line-height:37.4px;color:#5a6672;white-space:nowrap;letter-spacing:0.57px;">Figure 1: Timeline of recent earthquakes on La Palma</div>
<div class="a" style="left:2776px;top:431px;width:57px;height:1354px;background:#ebebeb"></div>
<div class="a" style="left:2749px;top:332px;width:83px;height:100px;background:#fff;border-left:1.5px solid #cfcfcf;border-bottom:1.5px solid #cfcfcf"></div>
<svg class="a" style="left:2774px;top:366px" width="24" height="32" viewBox="0 0 24 32"><path d="M16 5 L7 15.5 L16 26" fill="none" stroke="#999" stroke-width="4.4" stroke-linecap="round" stroke-linejoin="round"/></svg>
<div class="a" style="left:2750px;top:454px;width:72px;height:72px;background:#fff;border:1.3px solid #d9d9d9;border-radius:9px;box-shadow:0 2px 2px rgba(0,0,0,0.12)"></div>
<div class="a" style="left:2750px;top:544px;width:72px;height:72px;background:#fff;border:1.3px solid #d9d9d9;border-radius:9px;box-shadow:0 2px 2px rgba(0,0,0,0.12)"></div>
<svg class="a" style="left:2762px;top:473px" width="48" height="36" viewBox="0 0 48 36"><ellipse cx="23.7" cy="18" rx="17.6" ry="12.8" fill="none" stroke="#6f6f6f" stroke-width="4.2"/><circle cx="23.7" cy="18" r="5.2" fill="#6f6f6f"/></svg>
<svg class="a" style="left:2762px;top:557px" width="48" height="48" viewBox="0 0 48 48"><path d="M6 6 Q6 4 8 4 L42 4 Q44 4 44 6 L44 25 L27 43 L8 43 Q6 43 6 41 Z" fill="none" stroke="#6f6f6f" stroke-width="4.2" stroke-linejoin="round"/><path d="M44 25 L27 25 L27 43" fill="none" stroke="#6f6f6f" stroke-width="4.2" stroke-linejoin="round"/></svg>
<div class="a" style="left:2832px;top:332px;width:29px;height:1453px;background:#fafafa;border-left:1px solid #ededed"></div>
<div class="a" style="left:2839px;top:339px;width:16px;height:228px;border-radius:8px;background:#c1c1c1"></div>
</div>
</body></html>
